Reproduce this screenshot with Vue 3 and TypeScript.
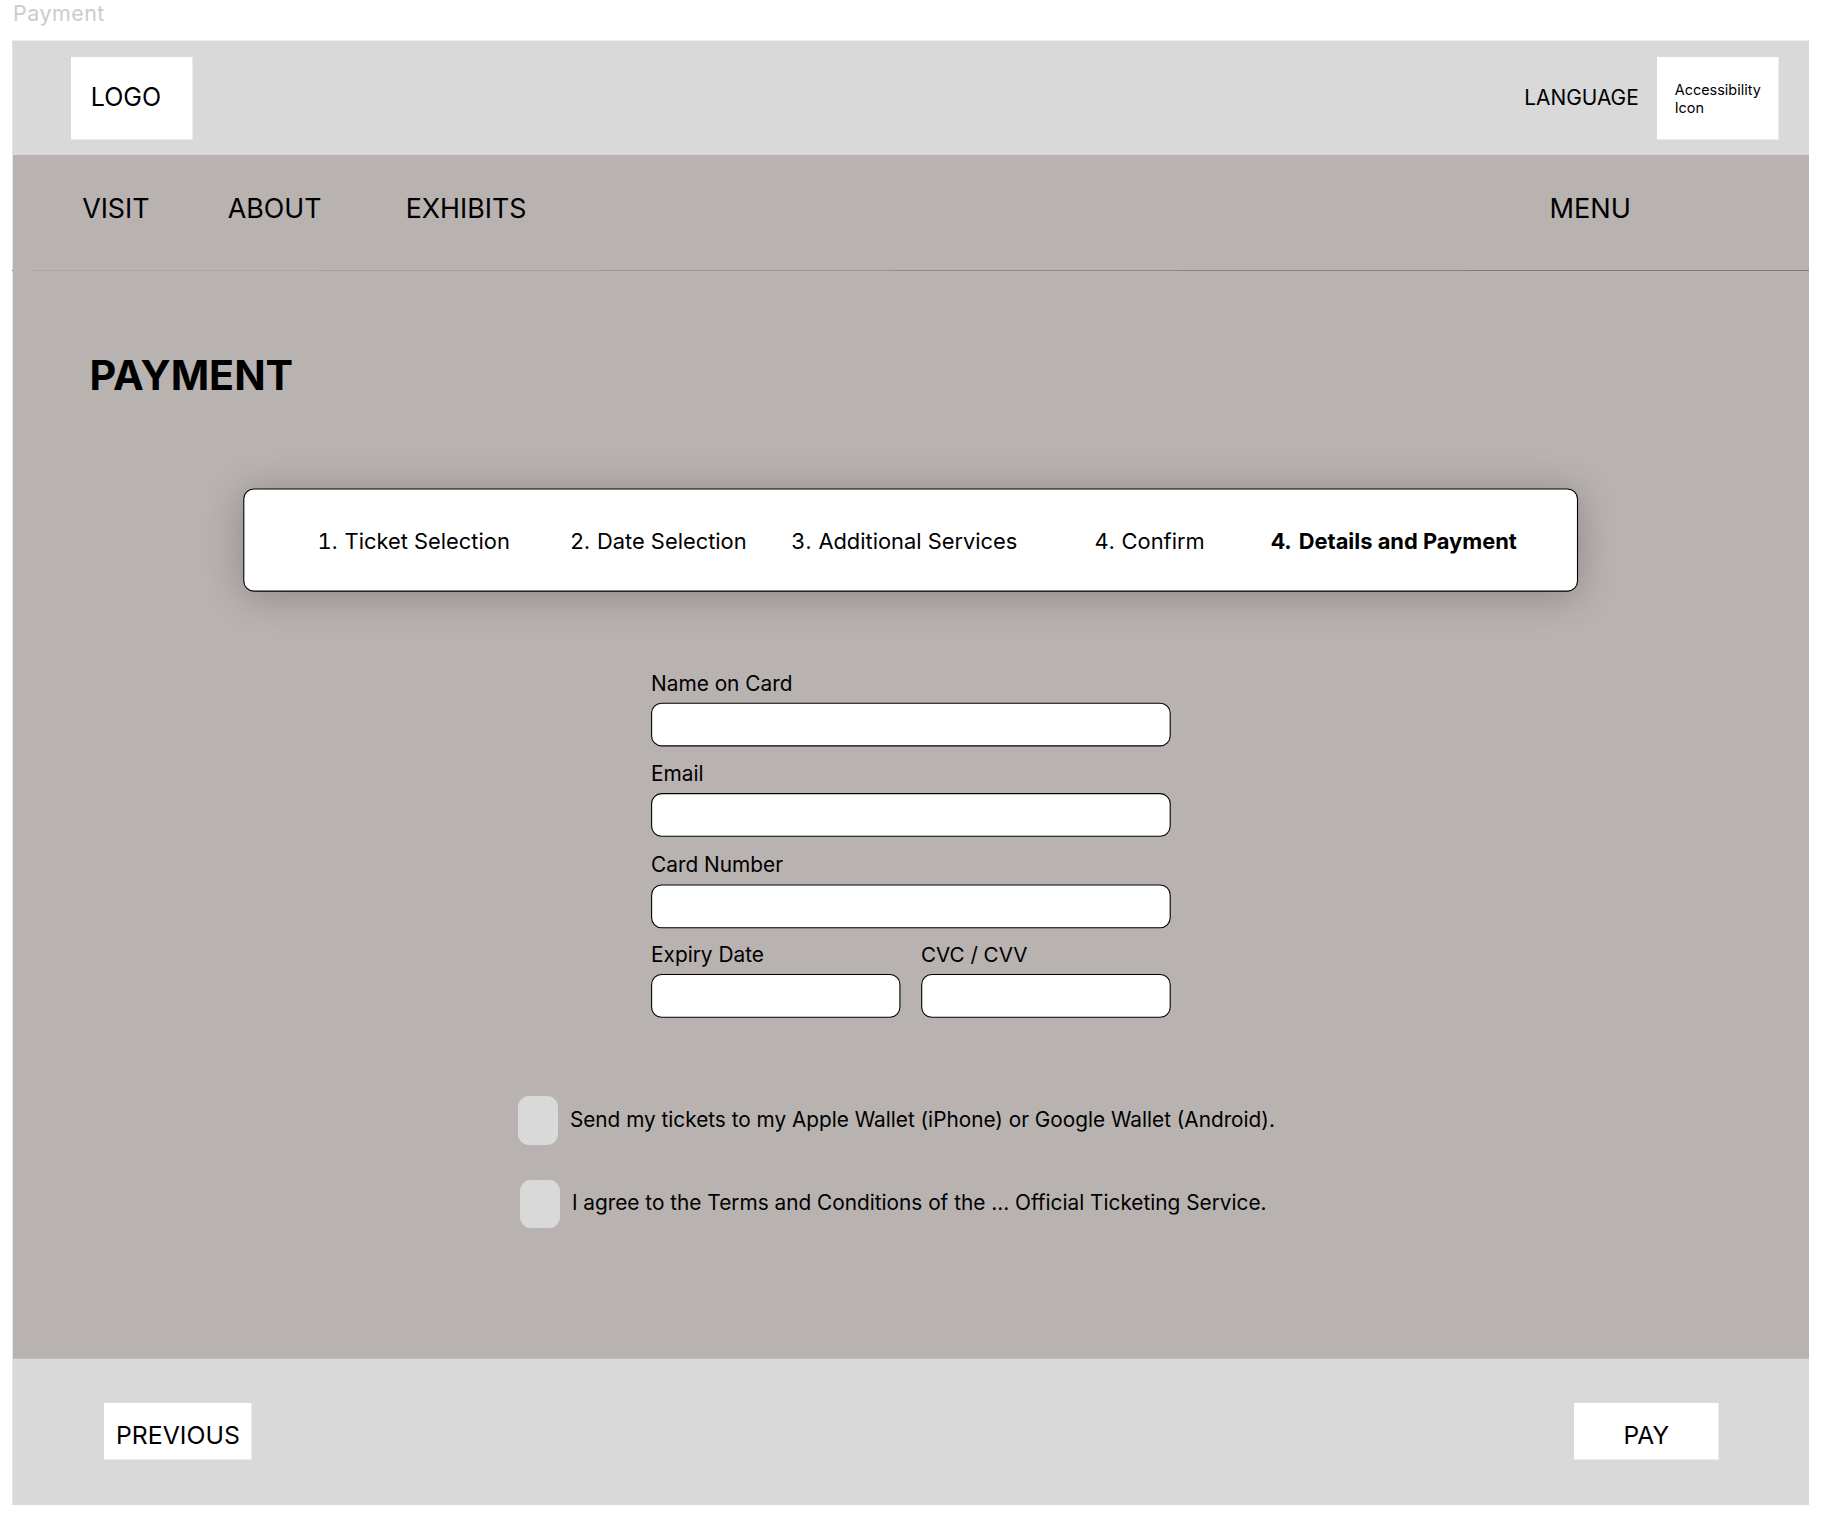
<script setup lang="ts">
interface Step {
  num: string
  label: string
  current?: boolean
}

interface Field {
  id: string
  label: string
  y: number
  x: number
  width: number
}

const steps: Step[] = [
  { num: '1.', label: 'Ticket Selection' },
  { num: '2.', label: 'Date Selection' },
  { num: '3.', label: 'Additional Services' },
  { num: '4.', label: 'Confirm' },
  { num: '4.', label: 'Details and Payment', current: true },
]

const fields: Field[] = [
  { id: 'name', label: 'Name on Card', x: 0.6, y: 1.2, width: 518.6 },
  { id: 'email', label: 'Email', x: 0.6, y: 1.6, width: 518.6 },
  { id: 'card', label: 'Card Number', x: 0.6, y: 1, width: 518.6 },
  { id: 'expiry', label: 'Expiry Date', x: 0.6, y: 1.5, width: 248.3 },
  { id: 'cvc', label: 'CVC / CVV', x: 0.7, y: 1.5, width: 248.5 },
]
</script>

<template>
  <div class="canvas">
    <div class="tag">Payment</div>
    <div class="frame">
      <header class="top">
        <div class="box logo">LOGO</div>
        <div class="language">LANGUAGE</div>
        <div class="box access">Accessibility<br />Icon</div>
      </header>

      <nav class="nav">
        <a class="visit">VISIT</a>
        <a class="about">ABOUT</a>
        <a class="exhibits">EXHIBITS</a>
        <a class="menu">MENU</a>
      </nav>
      <div class="rule"></div>

      <main class="main">
        <h1>PAYMENT</h1>

        <section class="stepper">
          <svg class="outline" width="1336" height="104" viewBox="0 0 1336 104">
            <rect x="0.8" y="1" width="1333.7" height="102.1" rx="10" fill="#fff" stroke="#000" stroke-width="1.1" />
          </svg>
          <ol>
            <li v-for="s in steps" :key="s.label" :class="{ current: s.current }">
              <span class="num">{{ s.num }}</span>{{ s.label }}
            </li>
          </ol>
        </section>

        <form class="form">
          <div v-for="f in fields" :key="f.id" class="field" :class="f.id">
            <label>{{ f.label }}</label>
            <svg :width="f.width + 2" height="46">
              <rect :x="f.x" :y="f.y" :width="f.width" height="42.7" rx="10" fill="#fff" stroke="#000" stroke-width="1.1" />
            </svg>
          </div>
        </form>

        <div class="check wallet">
          <span class="tick"></span>
          <span>Send my tickets to my Apple Wallet (iPhone) or Google Wallet (Android).</span>
        </div>
        <div class="check terms">
          <span class="tick"></span>
          <span>I agree to the Terms and Conditions of the ... Official Ticketing Service.</span>
        </div>
      </main>

      <footer class="bottom">
        <div class="box previous">PREVIOUS</div>
        <div class="box pay">PAY</div>
      </footer>
    </div>
  </div>
</template>

<style>
body {
  margin: 0;
  background: #fff;
}
</style>

<style scoped>
.canvas {
  width: 1824px;
  height: 1524px;
  overflow: hidden;
  background: #fff;
  color: #000;
  font-family: Inter, sans-serif;
  line-height: 30px;
  white-space: nowrap;
}
.tag {
  box-sizing: border-box;
  height: 40px;
  padding: 1px 0 0 13px;
  color: #ccc;
  font-size: 21.5px;
  letter-spacing: 0.45px;
  line-height: 25px;
}
.frame {
  box-sizing: border-box;
  width: 1797px;
  height: 1465px;
  margin-left: 12px;
  border-left: 1px solid #e6e5e4;
  border-top: 1px solid #eee;
  background: #b8b2b0;
}
.top {
  display: flex;
  align-items: flex-start;
  height: 114px;
  background: #d9d9d9;
}
.box {
  box-sizing: border-box;
  background: #fff;
  border: 0 solid #ececec;
  border-width: 0 1px 1px 0;
}
.logo {
  width: 122px;
  height: 83px;
  margin: 16px 0 0 58px;
  padding: 25px 0 0 19.8px;
  font-size: 25px;
}
.language {
  margin: 42px 0 0 auto;
  width: 132.8px;
  font-size: 20.9px;
}
.access {
  width: 122px;
  height: 83px;
  margin: 16px 30px 0 0;
  padding: 24px 0 0 17.7px;
  font-size: 14.45px;
  line-height: 18px;
}
.nav {
  display: flex;
  box-sizing: border-box;
  height: 115px;
  padding: 38px 0 0 69.2px;
  font-size: 26.8px;
}
.visit {
  width: 145.5px;
}
.about {
  width: 178px;
}
.menu {
  width: 259.6px;
  margin: 1px 0 0 auto;
  font-size: 27.15px;
}
.rule {
  height: 1px;
  background: linear-gradient(
    90deg,
    transparent 18px,
    #aca7a4 18px 306px,
    #a09c9a 306px 593px,
    #989492 593px 880px,
    #8e8a89 880px 1168px,
    #868281 1168px 1455px,
    #7e7b7a 1455px
  );
}
.rule::before {
  content: '';
  display: block;
  width: 1px;
  height: 1px;
  margin-left: -1px;
  background: #777;
}
.main {
  box-sizing: border-box;
  height: 1087px;
}
h1 {
  margin: 0;
  padding: 79px 0 0 76.6px;
  font-size: 41.28px;
  font-weight: 700;
  line-height: 50px;
}
.stepper {
  position: relative;
  box-sizing: border-box;
  width: 1335px;
  height: 104px;
  margin: 88px 0 0 230px;
  padding: 38px 0 0 70.6px;
}
.stepper::before {
  content: '';
  position: absolute;
  inset: 1px;
  border-radius: 10px;
  box-shadow: 0 4px 39px rgba(0, 0, 0, 0.25);
}
.outline {
  position: absolute;
  left: 0;
  top: 0;
}
ol {
  position: relative;
  display: grid;
  grid-template-columns: 252.4px 221.4px 303.2px 176.4px auto;
  margin: 0;
  padding: 0;
  list-style: none;
  font-size: 21.87px;
}
.num {
  display: inline-block;
  width: 24px;
  margin-right: 7px;
  text-align: right;
  font-variant-numeric: tabular-nums;
}
.current {
  font-weight: 700;
}
.current .num {
  margin-right: 7.8px;
}
.form {
  display: grid;
  grid-template-columns: 270px 249px;
  margin: 79px 0 0 638px;
  width: 519px;
  font-size: 20.83px;
  line-height: 26px;
}
.field {
  display: flex;
  flex-direction: column;
  gap: 5px;
}
.field svg {
  display: block;
  overflow: visible;
}
.name,
.email,
.card {
  grid-column: span 2;
}
.email {
  margin-top: 13px;
}
.card {
  margin-top: 14px;
  gap: 6px;
}
.expiry,
.cvc {
  margin-top: 12px;
}
.cvc {
  font-size: 20.6px;
}
.check {
  display: flex;
  align-items: flex-start;
  font-size: 20.8px;
}
.check span + span {
  margin: 8px 0 0 11.9px;
}
.tick {
  width: 40px;
  height: 48.5px;
  border-radius: 11px;
  background: #d9d9d9;
}
.wallet {
  margin: 77.3px 0 0 505px;
  font-size: 20.77px;
}
.wallet span + span {
  margin-top: 9px;
}
.terms {
  margin: 35px 0 0 507px;
}
.bottom {
  display: flex;
  align-items: flex-start;
  box-sizing: border-box;
  height: 147px;
  border-top: 1px solid #c3c0be;
  background: #d9d9d9;
  font-size: 24.8px;
}
.previous {
  width: 148px;
  height: 57px;
  margin: 44px 0 0 91px;
  padding: 17px 0 0 12px;
}
.pay {
  width: 145px;
  height: 57px;
  margin: 44px 90px 0 auto;
  padding: 17px 0 0 49.5px;
  font-size: 24.5px;
}
</style>
